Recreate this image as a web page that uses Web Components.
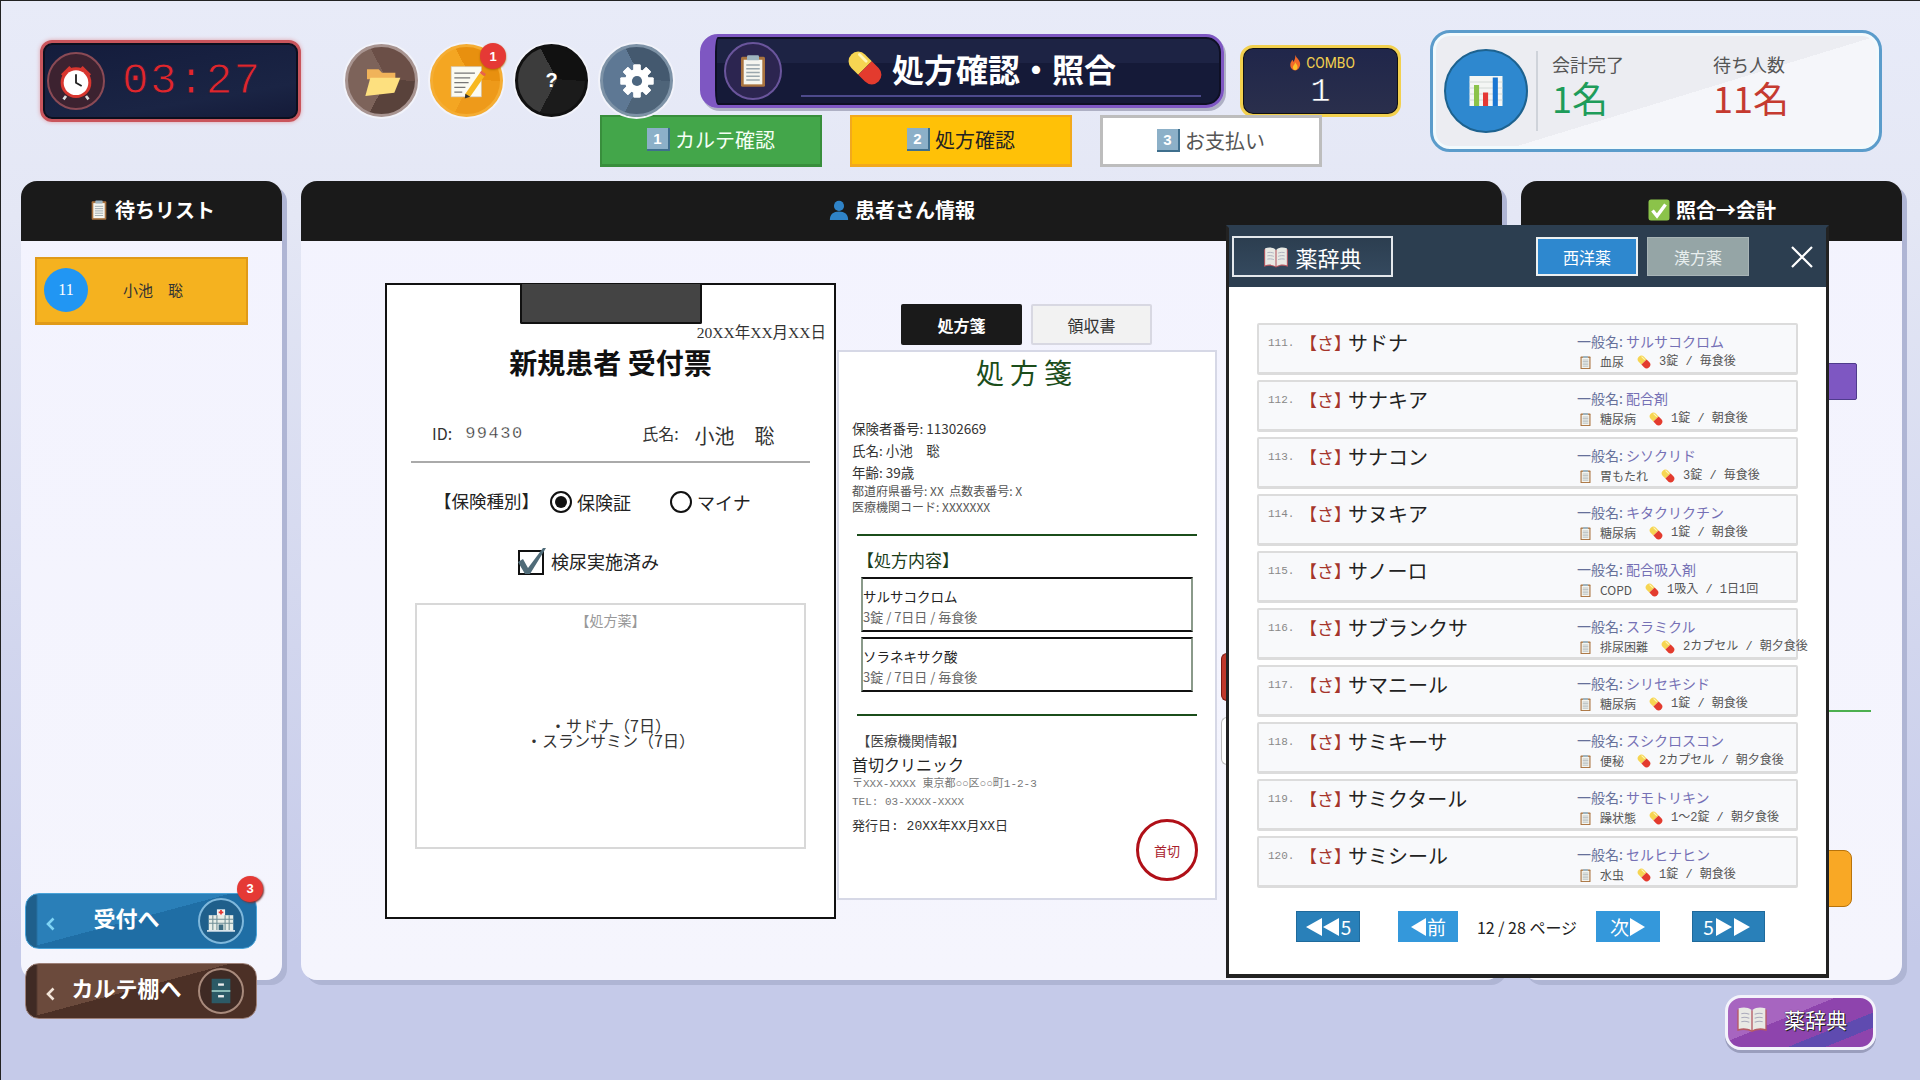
<!DOCTYPE html>
<html lang="ja">
<head>
<meta charset="utf-8">
<title>処方確認・照合</title>
<style>
  html, body { margin: 0; padding: 0; }
  body { width: 1920px; height: 1080px; overflow: hidden; font-family: "Noto Sans CJK JP", "Noto Sans", sans-serif; }
</style>
</head>
<body>
<game-app></game-app>
<script>
const JP = `"Noto Sans CJK JP", "Noto Sans", sans-serif`;
const MONO = `"Liberation Mono", "Noto Sans CJK JP", monospace`;
const SERIF = `"Liberation Serif", "Noto Sans CJK JP", serif`;

function gearTeeth() {
  let out = "";
  for (let i = 0; i < 8; i++) out += `<rect x="9.6" y="1" width="4.8" height="22" rx=".6" fill="#fff" transform="rotate(${i * 45} 12 12)"/>`;
  return out;
}

const ICONS = {
  alarm: `<path d="M3 8 8 3 10 5 5 10Z" fill="#d8362f"/><path d="M21 8 16 3 14 5 19 10Z" fill="#d8362f"/><path d="M6 21 4.5 23M18 21l1.5 2" stroke="#ddd" stroke-width="1.6"/><circle cx="12" cy="13" r="9.2" fill="#d8362f"/><circle cx="12" cy="13" r="7.4" fill="#fff"/><path d="M12 8v5l3.4 2" fill="none" stroke="#222" stroke-width="1.1"/>`,
  folder: `<path d="M3 5h7l2 2h8v4H3Z" fill="#f0b35a"/><path d="M2 21 5 10h18l-3.6 9Z" fill="#fde07f"/>`,
  memo: `<rect x="2" y="3" width="19" height="19" fill="#fbfbf2" stroke="#ccc" stroke-width=".4"/><path d="M4 7h13M4 10h10M4 13h9M4 16h7M4 19h5" stroke="#777" stroke-width=".8"/><path d="M11 20 20 7l3 2-9 13-3.4 1Z" fill="#f7b81f"/><path d="M20 7l1-1.4 3 2L23 9Z" fill="#e8624c"/><path d="M11 20l-.4 3 3.4-1Z" fill="#333"/>`,
  gear: `${gearTeeth()}<circle cx="12" cy="12" r="8" fill="#fff"/><circle cx="12" cy="12" r="3.4" fill="#4c6680"/>`,
  clipboard: `<rect x="4" y="2.5" width="16" height="20" rx="1" fill="#a9733f"/><rect x="5.8" y="4.5" width="12.4" height="16.4" fill="#f5f5ef"/><path d="M7.5 8h9M7.5 10.5h9M7.5 13h9M7.5 15.5h9M7.5 18h9" stroke="#9aa7ad" stroke-width="1"/><rect x="8" y="1.5" width="8" height="3.4" rx=".8" fill="#9fb4bf"/>`,
  pill: `<g transform="rotate(45 12 12)"><path d="M12 6.5H6.5a5.5 5.5 0 0 0 0 11H12Z" fill="#f6d552"/><path d="M12 6.5h5.5a5.5 5.5 0 0 1 0 11H12Z" fill="#e33b2e"/><rect x="3.500" y="8" width="7" height="1.6" rx=".8" fill="#fff6b8"/></g>`,
  fire: `<path d="M12 1c1 4 6 6 7 11 .8 5-3 10-7 10s-8-4-7-9c.4-2.4 2-3.4 2.5-5.4 1 .6 1.6 1.5 1.7 3C11 9 12.5 5 12 1Z" fill="#f0692a"/><path d="M12 11c.5 2 3.4 3.4 3.4 6.3 0 2.4-1.7 4-3.4 4s-3.5-1.6-3.4-3.8c0-2.4 3-3.3 3.4-6.5Z" fill="#fbc02d"/>`,
  chart: `<rect x="1" y="2" width="22" height="20" fill="#f4f6f4"/><path d="M1 6h22M1 10h22M1 14h22M1 18h22" stroke="#cfd6d2" stroke-width=".6"/><rect x="4" y="8" width="3.4" height="14" fill="#8bc34a"/><rect x="10" y="13" width="3.4" height="9" fill="#e53935"/><rect x="16.500" y="3" width="3.4" height="19" fill="#1976d2"/>`,
  person: `<circle cx="12" cy="7.500" r="5.5" fill="#2f83c7"/><path d="M2 23c0-6.500 4-9.500 10-9.500S22 16.500 22 23Z" fill="#2f83c7"/>`,
  check: `<rect x="1.500" y="1.500" width="21" height="21" rx="2.5" fill="#8bc34a"/><path d="M5.500 12.500 10 18 18.500 6.500" fill="none" stroke="#fff" stroke-width="3.4"/>`,
  book: `<path d="M1 5c4-1.600 8-1.200 11 .8 3-2 7-2.400 11-.8v16c-4-1.400-8-1-11 .8-3-1.800-7-2.200-11-.8Z" fill="#b65a63"/><path d="M2 4c3.500-1.200 7-.8 9.500 1v15.500C9 19 5.500 18.600 2 19.500ZM22 4c-3.500-1.200-7-.8-9.500 1v15.500c2.500-1.500 6-1.900 9.500-1Z" fill="#e8e9e4"/><path d="M4 8c2-.5 4-.3 6 .4M4 11c2-.5 4-.3 6 .4M4 14c2-.5 4-.3 6 .4M14 8.400c2-.7 4-.9 6-.4M14 11.400c2-.7 4-.9 6-.4M14 14.400c2-.7 4-.9 6-.4" fill="none" stroke="#aab" stroke-width=".8"/>`,
  hospital: `<rect x="8.500" y="2" width="7" height="6" fill="#f3f3f3"/><path d="M12 2.500v4M10 4.500h4" stroke="#e53935" stroke-width="1.500"/><rect x="1.500" y="7" width="21" height="13" fill="#e8eee8"/><path d="M1.500 10.500h21M1.500 14h21M5 7v13M8.500 7v13M15.500 7v13M19 7v13" stroke="#6f8f96" stroke-width=".9"/><rect x="10" y="15" width="4" height="5" fill="#3b6a80"/><path d="M0 20.500h24" stroke="#fff" stroke-width="1.200"/>`,
  cabinet: `<rect x="4" y="1.500" width="16" height="21" fill="#2c5a66"/><path d="M4 12h16" stroke="#cfe" stroke-width="1"/><rect x="9.500" y="5.500" width="5" height="2" fill="#eee"/><rect x="9.500" y="15.500" width="5" height="2" fill="#eee"/>`
};

class AppIcon extends HTMLElement {
  constructor() { super(); this.attachShadow({ mode: "open" }); }
  connectedCallback() {
    const size = this.getAttribute("size") || 20;
    this.shadowRoot.innerHTML = `<style>:host{display:inline-block;line-height:0;flex:none;width:${size}px;height:${size}px}svg{display:block}</style>
      <svg width="${size}" height="${size}" viewBox="0 0 24 24">${ICONS[this.getAttribute("name")] || ""}</svg>`;
  }
}
customElements.define("app-icon", AppIcon);

class GameTimer extends HTMLElement {
  constructor() { super(); this.attachShadow({ mode: "open" }); }
  connectedCallback() {
    this.shadowRoot.innerHTML = `<style>
      :host { display: flex; flex: none; align-items: center; box-sizing: border-box; width: 261px; height: 82px; margin-top: 10px;
        background: linear-gradient(170deg, #141c3c, #1a2444 70%, #141a38); border: 3px solid #c9555c; border-radius: 12px;
        box-shadow: inset 0 0 0 2px #0c0f1e, 0 0 4px #e0a0a8; padding-left: 4px; color: #e0262c; }
      .ring { width: 58px; height: 58px; border-radius: 50%; background: #3c2230; border: 2px solid #8a4a55; box-sizing: border-box;
        display: flex; align-items: center; justify-content: center; }
      .t { font: 44px ${MONO}; letter-spacing: 1.500px; margin-left: 17px; -webkit-text-stroke: .9px #182040; }
    </style>
    <div class="ring"><app-icon name="alarm" size="40"></app-icon></div><div class="t">03:27</div>`;
  }
}
customElements.define("game-timer", GameTimer);

class RoundButton extends HTMLElement {
  constructor() { super(); this.attachShadow({ mode: "open" }); }
  connectedCallback() {
    const [a, b, c, ring] = this.getAttribute("colors").split(",");
    const badge = this.getAttribute("badge");
    this.shadowRoot.innerHTML = `<style>
      :host { display: block; position: relative; flex: none; box-sizing: border-box; width: 73px; height: 73px; border-radius: 50%;
        background: conic-gradient(from -28deg at 58% 48%, ${a} 0 122deg, ${b} 122deg 235deg, ${c} 235deg 360deg);
        border: 3px solid ${ring}; box-shadow: 0 0 0 2px #f2f3fa; color: #fff; }
      .c { position: absolute; inset: 0; display: flex; align-items: center; justify-content: center; font: bold 20px "Liberation Sans", sans-serif; }
      .b { position: absolute; top: -4px; right: -6px; width: 26px; height: 26px; border-radius: 50%; background: #e53935; border: 0;
        color: #fff; font: bold 13px "Liberation Sans", sans-serif; display: flex; align-items: center; justify-content: center; box-shadow: 0 1px 2px #b36a00; }
    </style><div class="c"><slot></slot></div>${badge ? `<div class="b">${badge}</div>` : ""}`;
  }
}
customElements.define("round-button", RoundButton);

class TitleBanner extends HTMLElement {
  constructor() { super(); this.attachShadow({ mode: "open" }); }
  connectedCallback() {
    this.shadowRoot.innerHTML = `<style>
      :host { display: block; position: relative; flex: none; box-sizing: border-box; width: 524px; height: 74px; margin-top: 4px;
        background: linear-gradient(#1d2344 0 38%, #151a38 38% 100%); border: 3px solid #7e57c2; border-left: 15px solid #7e57c2;
        border-radius: 18px; box-shadow: 2px 3px 0 #aeb0c4, inset 0 0 0 2px #0e1024; color: #fff; }
      .inner { display: flex; align-items: center; height: 100%; }
      .ring { width: 58px; height: 58px; margin-left: 9px; border-radius: 50%; background: #2c2550; border: 2px solid #6a559c;
        box-sizing: border-box; display: flex; align-items: center; justify-content: center; }
      .h { display: flex; align-items: center; gap: 6px; margin: -6px 0 0 62px; font: bold 32px ${JP}; white-space: nowrap; }
      .rule { position: absolute; left: 86px; right: 20px; bottom: 8px; height: 2px; background: #4d4a8c; }
    </style>
    <div class="inner"><div class="ring"><app-icon name="clipboard" size="36"></app-icon></div>
    <div class="h"><app-icon name="pill" size="42"></app-icon><span>処方確認・照合</span></div></div><div class="rule"></div>`;
  }
}
customElements.define("title-banner", TitleBanner);

class ComboBox extends HTMLElement {
  constructor() { super(); this.attachShadow({ mode: "open" }); }
  connectedCallback() {
    this.shadowRoot.innerHTML = `<style>
      :host { display: flex; flex: none; flex-direction: column; align-items: center; box-sizing: border-box; width: 161px; height: 72px; margin-top: 15px;
        background: linear-gradient(#20264a, #2a2f4c); border: 3px solid #f2d04e; border-radius: 13px; box-shadow: inset 0 0 0 1px #111; color: #fff; padding-top: 5px; }
      .l { display: flex; align-items: center; gap: 3px; color: #f2d04e; font: 15px/20px "Roboto", ${JP}; transform: scaleX(.92); }
      .n { font: 34px/38px ${MONO}; -webkit-text-stroke: .6px #252a4a; }
    </style><div class="l"><app-icon name="fire" size="18"></app-icon>COMBO</div><div class="n">1</div>`;
  }
}
customElements.define("combo-box", ComboBox);

class StatsCard extends HTMLElement {
  constructor() { super(); this.attachShadow({ mode: "open" }); }
  connectedCallback() {
    this.shadowRoot.innerHTML = `<style>
      :host { display: flex; flex: none; align-items: center; box-sizing: border-box; width: 452px; height: 122px;
        background: linear-gradient(163deg, #ecedf2 0 55%, #f5f6fa 55% 100%); border: 3px solid #5b9ccb; border-radius: 20px;
        box-shadow: inset 0 0 0 3px #f2fafd; padding-left: 11px; }
      .ic { width: 84px; height: 84px; border-radius: 50%; background: #2e88cf; border: 2px solid #1d628f; box-sizing: border-box;
        display: flex; align-items: center; justify-content: center; }
      .sep { width: 2px; height: 80px; background: #cfd3da; margin: 0 14px 0 8px; }
      .col { width: 161px; font-family: ${JP}; padding-bottom: 13px; }
      .l { font-size: 18px; line-height: 24px; color: #555; }
      .v { font-size: 36px; line-height: 42px; }
      .g { color: #1e9c5a; } .r { color: #c53a30; }
    </style>
    <div class="ic"><app-icon name="chart" size="36"></app-icon></div><div class="sep"></div>
    <div class="col"><div class="l">会計完了</div><div class="v g">1名</div></div>
    <div class="col"><div class="l">待ち人数</div><div class="v r">11名</div></div>`;
  }
}
customElements.define("stats-card", StatsCard);

class StepTab extends HTMLElement {
  constructor() { super(); this.attachShadow({ mode: "open" }); }
  connectedCallback() {
    this.shadowRoot.innerHTML = `<style>
      :host { display: flex; align-items: center; justify-content: center; gap: 5px; box-sizing: border-box; width: 222px; height: 52px;
        font: 20px ${JP}; border: 2px solid; padding-bottom: 2px; }
      :host([kind="done"]) { background: #43a64a; border-color: #388e3c; border-bottom-width: 3px; color: #f4fff4; }
      :host([kind="now"]) { background: #ffc107; border-color: #f2a91c; border-bottom-width: 3px; color: #222; }
      :host([kind="todo"]) { background: #fff; border-color: #bdbdbd; border-width: 3px; color: #555; }
      .k { width: 23px; height: 23px; background: #8cb0c8; border-right: 2px solid #3f6f8d; border-bottom: 2px solid #3f6f8d; box-sizing: border-box;
        color: #fff; font: bold 15px/21px "Liberation Sans", sans-serif; text-align: center; }
    </style><span class="k">${this.getAttribute("n")}</span><span><slot></slot></span>`;
  }
}
customElements.define("step-tab", StepTab);

class SidePanel extends HTMLElement {
  constructor() { super(); this.attachShadow({ mode: "open" }); }
  connectedCallback() {
    this.shadowRoot.innerHTML = `<style>
      :host { display: flex; flex-direction: column; position: relative; height: 799px; border-radius: 16px;
        background: linear-gradient(#f3f3fe, #f5f5fd); box-shadow: 5px 5px 0 #afb5d4; }
      .h { height: 60px; box-sizing: border-box; padding-bottom: 3px; flex: none; display: flex; align-items: center; justify-content: center; gap: 5px; background: #1a1a1a;
        border-radius: 16px 16px 0 0; color: #fff; font: bold 20px ${JP}; }
      .b { flex: 1; position: relative; min-height: 0; }
    </style><div class="h"><slot name="head"></slot></div><div class="b"><slot></slot></div>`;
  }
}
customElements.define("side-panel", SidePanel);

class WaitItem extends HTMLElement {
  constructor() { super(); this.attachShadow({ mode: "open" }); }
  connectedCallback() {
    this.shadowRoot.innerHTML = `<style>
      :host { display: flex; align-items: center; box-sizing: border-box; width: 213px; height: 68px; margin: 16px 0 0 14px; padding: 0 0 2px 7px;
        background: #f5b21f; border: 2px solid #e09a18; border-bottom-width: 3px; font: 15px ${JP}; color: #333; }
      .n { width: 44px; height: 44px; border-radius: 50%; background: #2196f3; color: #fff; font: 16px/44px ${SERIF}; text-align: center; }
      .t { margin-left: 35px; white-space: pre; }
    </style><div class="n">11</div><div class="t">小池　聡</div>`;
  }
}
customElements.define("wait-item", WaitItem);

class NavButton extends HTMLElement {
  constructor() { super(); this.attachShadow({ mode: "open" }); }
  connectedCallback() {
    const [a, b, c, edge, ring, chev] = this.getAttribute("colors").split(",");
    const badge = this.getAttribute("badge");
    this.shadowRoot.innerHTML = `<style>
      :host { display: flex; align-items: center; position: relative; box-sizing: border-box; width: 232px; height: 56px; border-radius: 14px; color: #fff;
        background: linear-gradient(to right, ${c} 0 10px, transparent 12px), linear-gradient(165deg, ${a} 0 47%, ${b} 47% 100%); border: 1px solid ${edge}; }
      svg { flex: none; margin: 6px 0 0 20px; display: block; }
      .t { flex: 1; text-align: center; font: bold 22px ${JP}; white-space: nowrap; margin: -8px 0 0 0; }
      .r { width: 46px; height: 46px; margin-right: 12px; border-radius: 50%; border: 2px solid ${ring}; background: ${c}; box-sizing: border-box;
        display: flex; align-items: center; justify-content: center; }
      .b { position: absolute; top: -18px; right: -7px; width: 26px; height: 26px; border-radius: 50%; background: #e53935; color: #fff;
        font: bold 13px/26px "Liberation Sans", sans-serif; text-align: center; box-shadow: 1px 1px 2px #7a3030; }
    </style><svg width="9" height="14" viewBox="0 0 9 14"><path d="M7.500 1.500 2 7l5.500 5.500" fill="none" stroke="${chev}" stroke-width="2.600"/></svg><div class="t"><slot></slot></div>
    <div class="r"><app-icon name="${this.getAttribute("icon")}" size="28"></app-icon></div>${badge ? `<div class="b">${badge}</div>` : ""}`;
  }
}
customElements.define("nav-button", NavButton);

class ReceptionForm extends HTMLElement {
  constructor() { super(); this.attachShadow({ mode: "open" }); }
  connectedCallback() {
    this.shadowRoot.innerHTML = `<style>
      :host { display: block; box-sizing: border-box; width: 451px; height: 636px; background: #fff; border: 2px solid #111; color: #222; font-family: ${JP}; flex: none; position: relative; z-index: 1; }
      .clip { width: 182px; height: 40px; box-sizing: border-box; margin: -1px auto 0; background: #444; border: 2px solid #111; border-top: 0; border-radius: 0 0 2px 2px; }
      .date { font: 15.500px/18px ${SERIF}; text-align: right; padding-right: 8px; color: #333; }
      h1 { margin: 2px 0 0; font: bold 28px/36px ${JP}; text-align: center; color: #111; }
      .idr { display: flex; align-items: center; height: 30px; margin-top: 38px; padding-left: 45px; font-size: 16px; color: #333; }
      .num { font: 17px ${MONO}; letter-spacing: 1.500px; margin-left: 13px; width: 177px; -webkit-text-stroke: .3px #fff; }
      .name { font-size: 20px; margin-left: 16px; white-space: pre; padding-top: 5px; }
      .hr { height: 2px; background: #aaa; margin: 13px 24px 0; }
      .ins { display: flex; align-items: center; height: 30px; margin-top: 24px; padding-left: 47px; font-size: 18px; }
      .ins .lab { width: 116px; font-size: 17.500px; margin-top: -3px; }
      .radio { width: 22px; height: 22px; box-sizing: border-box; border: 2px solid #111; border-radius: 50%; background: #fff; flex: none; display: flex; align-items: center; justify-content: center; }
      .radio i { width: 12px; height: 12px; border-radius: 50%; background: #111; }
      .opt { margin-left: 5px; font-size: 18px; width: 93px; }
      .chk { display: flex; align-items: center; height: 30px; margin-top: 29px; font-size: 18px; gap: 4px; padding-left: 130px; }
      .chk svg { display: block; }
      .box { height: 246px; margin: 27px 28px 0; border: 2px solid #d8d8d8; box-sizing: border-box; display: flex; flex-direction: column; align-items: center; color: #333; }
      .bh { font-size: 14px; color: #999; margin-top: 5px; line-height: 20px; }
      .ls { margin-top: 88px; text-align: center; font-size: 16px; line-height: 15px; white-space: pre; }
    </style>
    <div class="clip"></div>
    <div class="date">20XX年XX月XX日</div>
    <h1>新規患者 受付票</h1>
    <div class="idr"><span>ID:</span><span class="num">99430</span><span>氏名:</span><span class="name">小池　聡</span></div>
    <div class="hr"></div>
    <div class="ins"><span class="lab">【保険種別】</span><span class="radio"><i></i></span><span class="opt">保険証</span><span class="radio"></span><span class="opt">マイナ</span></div>
    <div class="chk"><svg width="30" height="28" viewBox="0 0 30 28"><rect x="2" y="4" width="24" height="23" fill="#fff" stroke="#111" stroke-width="2"/><path d="M1 15 6 12 11 21 26 1 29 1 13 27 8 27Z" fill="#4f6b78"/></svg><span>検尿実施済み</span></div>
    <div class="box"><div class="bh">【処方薬】</div><div class="ls">・サドナ（7日）
・スランサミン（7日）</div></div>`;
  }
}
customElements.define("reception-form", ReceptionForm);

class PaperTabs extends HTMLElement {
  constructor() { super(); this.attachShadow({ mode: "open" }); }
  connectedCallback() {
    this.shadowRoot.innerHTML = `<style>
      :host { display: flex; gap: 9px; height: 41px; margin: 21px 0 5px 64px; font: 16px ${JP}; }
      div { width: 121px; box-sizing: border-box; display: flex; align-items: center; justify-content: center; border-radius: 2px; }
      .on { background: #1a1a1a; color: #fff; font-weight: bold; }
      .off { background: #f2f2f2; border: 2px solid #d8d8e2; color: #333; }
    </style><div class="on">処方箋</div><div class="off">領収書</div>`;
  }
}
customElements.define("paper-tabs", PaperTabs);

class PrescriptionPaper extends HTMLElement {
  constructor() { super(); this.attachShadow({ mode: "open" }); }
  connectedCallback() {
    this.shadowRoot.innerHTML = `<style>
      :host { display: block; position: relative; box-sizing: border-box; width: 380px; height: 550px; background: #fff; border: 2px solid #d6d8e6; color: #222; font-family: ${JP}; padding: 0 0 0 13px; }
      h2 { margin: 0 0 0 -13px; font: 28px/40px ${JP}; color: #1b4d1b; text-align: center; letter-spacing: 6px; }
      .info { margin-top: 25px; font-size: 13.500px; line-height: 22px; color: #333; }
      .sm { font-size: 12px; line-height: 16px; color: #555; white-space: pre; }
      .rule { height: 2px; background: #1b4d1b; margin: 19px 18px 0 5px; }
      .sec { font-size: 17px; line-height: 22px; color: #1b3d1b; margin: 13px 0 0 5px; }
      .med { box-sizing: border-box; height: 55px; margin: 0 22px 5px 9px; border: 2px solid #8a9a8a; border-top-color: #111; border-bottom-color: #111;
        font-size: 13.500px; color: #222; padding-top: 7px; }
      .med b { display: block; font-weight: 400; line-height: 20px; }
      .med span { display: block; font-size: 13px; line-height: 22px; color: #666; }
      .org { font-size: 13.500px; line-height: 20px; color: #444; margin: 14px 0 0 5px; }
      .cl { font-size: 16px; line-height: 24px; margin-top: 2px; color: #222; }
      .ad { font: 11px/18px ${MONO}; color: #777; white-space: pre; margin-top: -1px; }
      .is { font: 13px/20px ${MONO}; color: #333; margin-top: 6px; }
      .stamp { position: absolute; left: 297px; top: 467px; width: 62px; height: 62px; box-sizing: border-box; border: 3px solid #b01018; border-radius: 50%;
        display: flex; align-items: center; justify-content: center; color: #a8202c; font-size: 13px; }
    </style>
    <h2>処方箋</h2>
    <div class="info">保険者番号: 11302669<br>氏名: 小池　聡<br>年齢: 39歳</div>
    <div class="sm">都道府県番号: XX  点数表番号: X
医療機関コード: XXXXXXX</div>
    <div class="rule"></div>
    <div class="sec">【処方内容】</div>
    <div class="med" style="margin-top:6px"><b>サルサコクロム</b><span>3錠 / 7日日 / 毎食後</span></div>
    <div class="med"><b>ソラネキサク酸</b><span>3錠 / 7日日 / 毎食後</span></div>
    <div class="rule" style="margin-top:22px"></div>
    <div class="org">【医療機関情報】</div>
    <div class="cl">首切クリニック</div>
    <div class="ad">〒XXX-XXXX 東京都○○区○○町1-2-3
TEL: 03-XXXX-XXXX</div>
    <div class="is">発行日: 20XX年XX月XX日</div>
    <div class="stamp">首切</div>`;
  }
}
customElements.define("prescription-paper", PrescriptionPaper);

class DictRow extends HTMLElement {
  constructor() { super(); this.attachShadow({ mode: "open" }); }
  connectedCallback() {
    const a = n => this.getAttribute(n);
    this.shadowRoot.innerHTML = `<style>
      :host { display: flex; flex: none; box-sizing: border-box; width: 541px; height: 52px; background: #f8f9fb; border: 2px solid #dcdcdc; border-bottom-width: 3px; border-radius: 2px;
        font-family: ${JP}; position: relative; white-space: nowrap; padding-top: 1px; }
      .no { flex: none; width: 32px; margin-left: 9px; font: 11px/34px ${MONO}; color: #888; }
      .ka { flex: none; width: 48px; font-size: 17px; line-height: 34px; color: #a5352b; }
      .nm { flex: none; width: 229px; font-size: 20px; line-height: 34px; color: #222; }
      .rt { flex: none; padding-top: 4px; }
      .g { font-size: 14px; line-height: 22px; color: #7570b5; }
      .g i { font-style: normal; color: #66709a; }
      .d { display: flex; align-items: center; font-size: 12px; line-height: 18px; color: #555; height: 18px; margin: 1px 0 0 1px; }
      .d .v { margin: 0 12px 0 7px; }
      .d .x { font-family: ${MONO}; white-space: pre; }
      .d .q { margin-left: 7px; }
    </style>
    <div class="no">${a("no")}.</div><div class="ka">【さ】</div><div class="nm">${a("name")}</div>
    <div class="rt"><div class="g"><i>一般名:</i> ${a("generic")}</div>
    <div class="d"><app-icon name="clipboard" size="15"></app-icon><span class="v">${a("use")}</span><app-icon name="pill" size="16"></app-icon><span class="x q">${a("dose")}</span><span class="x"> / </span><span class="x">${a("when")}</span></div></div>`;
  }
}
customElements.define("dict-row", DictRow);

class DictModal extends HTMLElement {
  constructor() { super(); this.attachShadow({ mode: "open" }); }
  connectedCallback() {
    const rows = [
      [111, "サドナ", "サルサコクロム", "血尿", "3錠", "毎食後"],
      [112, "サナキア", "配合剤", "糖尿病", "1錠", "朝食後"],
      [113, "サナコン", "シソクリド", "胃もたれ", "3錠", "毎食後"],
      [114, "サヌキア", "キタクリクチン", "糖尿病", "1錠", "朝食後"],
      [115, "サノーロ", "配合吸入剤", "COPD", "1吸入", "1日1回"],
      [116, "サブランクサ", "スラミクル", "排尿困難", "2カプセル", "朝夕食後"],
      [117, "サマニール", "シリセキシド", "糖尿病", "1錠", "朝食後"],
      [118, "サミキーサ", "スシクロスコン", "便秘", "2カプセル", "朝夕食後"],
      [119, "サミクタール", "サモトリキン", "躁状態", "1〜2錠", "朝夕食後"],
      [120, "サミシール", "セルヒナヒン", "水虫", "1錠", "朝食後"]
    ].map(r => `<dict-row no="${r[0]}" name="${r[1]}" generic="${r[2]}" use="${r[3]}" dose="${r[4]}" when="${r[5]}"></dict-row>`).join("");
    this.shadowRoot.innerHTML = `<style>
      :host { position: absolute; left: 1226px; top: 225px; width: 603px; height: 753px; box-sizing: border-box; z-index: 5; display: flex; flex-direction: column;
        background: #2c3e50; border: 3px solid #2c3e50; border-bottom-width: 4px; border-left-color: #222; border-right-color: #222; border-bottom-color: #222; font-family: ${JP}; }
      .hd { height: 59px; flex: none; display: flex; align-items: center; padding-left: 3px; }
      .ti { width: 161px; height: 41px; box-sizing: border-box; border: 2px solid #e4e8ec; background: linear-gradient(#2c3e50, #34495e); color: #fff; font-size: 22px; display: flex; align-items: center; justify-content: center; gap: 6px; margin-top: -2px; }
      .tb { width: 102px; height: 39px; box-sizing: border-box; display: flex; align-items: center; justify-content: center; font-size: 16px; color: #fff; margin-top: -2px; }
      .w { background: #2e88cf; border: 2px solid #ecf0f1; margin-left: 143px; }
      .k { background: #95a5a6; border: 1px solid #a8b4b6; color: #e8eeee; margin-left: 9px; }
      .x { margin-left: 41px; margin-top: -2px; display: block; }
      .bd { flex: 1; background: #fff; padding: 36px 0 0 28px; box-sizing: border-box; display: flex; flex-direction: column; gap: 5px; }
      .pg { display: flex; align-items: center; height: 31px; margin-top: 18px; padding-left: 39px; color: #222; }
      .btn { box-sizing: border-box; height: 31px; display: flex; align-items: center; justify-content: center; color: #fff; font-size: 19px; }
      .btn svg { display: block; }
      .d { background: #2980b9; border: 1px solid #1f6a9c; }
      .l { background: #3498db; }
      .t { font-size: 16px; white-space: nowrap; width: 138px; text-align: center; }
    </style>
    <div class="hd"><div class="ti"><app-icon name="book" size="26"></app-icon><span>薬辞典</span></div>
      <div class="tb w">西洋薬</div><div class="tb k">漢方薬</div>
      <svg class="x" width="24" height="24" viewBox="0 0 24 24"><path d="M2 2 22 22M22 2 2 22" stroke="#fff" stroke-width="2.200"/></svg></div>
    <div class="bd">${rows}
      <div class="pg">
        <div class="btn d" style="width:64px"><svg width="36" height="20" viewBox="0 0 36 20"><path d="M17 1v18L1 10ZM34 1v18L18 10Z" fill="#fff"/></svg><span>5</span></div>
        <div class="btn l" style="width:60px;margin-left:38px"><svg width="17" height="20" viewBox="0 0 17 20"><path d="M16 1v18L1 10Z" fill="#fff"/></svg><span>前</span></div>
        <div class="t">12 / 28 ページ</div>
        <div class="btn l" style="width:64px"><span>次</span><svg width="17" height="20" viewBox="0 0 17 20"><path d="M1 1v18l15-9Z" fill="#fff"/></svg></div>
        <div class="btn d" style="width:73px;margin-left:32px"><span>5</span><svg width="40" height="20" viewBox="0 0 40 20"><path d="M2 1v18l16-9ZM20 1v18l16-9Z" fill="#fff"/></svg></div>
      </div>
    </div>`;
  }
}
customElements.define("dict-modal", DictModal);

class BookButton extends HTMLElement {
  constructor() { super(); this.attachShadow({ mode: "open" }); }
  connectedCallback() {
    this.shadowRoot.innerHTML = `<style>
      :host { display: flex; align-items: center; box-sizing: border-box; width: 151px; height: 55px; border-radius: 16px; padding: 0 0 7px 8px; gap: 16px; color: #fff;
        background: linear-gradient(158deg, #a765c0 0 40%, #8e44ad 40% 68%, #5f4bb0 68% 82%, #8e44ad 82%); border: 3px solid #f3f3fb; box-shadow: 0 3px 0 #9a9ebd;
        font: 21px ${JP}; text-shadow: 0 0 1px #000, 1px 1px 0 #222; }
    </style><app-icon name="book" size="32"></app-icon><span>薬辞典</span>`;
  }
}
customElements.define("book-button", BookButton);

class GameApp extends HTMLElement {
  constructor() { super(); this.attachShadow({ mode: "open" }); }
  connectedCallback() {
    this.shadowRoot.innerHTML = `<style>
      :host { display: block; position: relative; width: 1920px; height: 1080px; overflow: hidden; box-sizing: border-box; font-family: ${JP};
        background: linear-gradient(#e8ebf8, #e4e7f5 20%, #c5cae9 88%); box-shadow: inset 1px 1px 0 #222; }
      header { height: 181px; box-sizing: border-box; padding-top: 30px; }
      .top { display: flex; height: 85px; padding-left: 40px; align-items: flex-start; }
      .rounds { flex: none; display: flex; gap: 12px; margin: 14px 28px 0 44px; width: 327px; position: relative; z-index: 2; }
      .steps { display: flex; gap: 28px; padding-left: 600px; position: relative; }
      main { display: grid; grid-template-columns: 261px 1201px 381px; gap: 19px; padding-left: 21px; }
      .center { display: flex; padding: 42px 0 0 84px; }
      .right { display: flex; flex-direction: column; margin-left: 1px; }
      .left-foot { position: absolute; left: 4px; top: 652px; display: flex; flex-direction: column; gap: 14px; z-index: 3; }
      .peek { position: absolute; box-sizing: border-box; }
    </style>
    <header>
      <div class="top">
        <game-timer></game-timer>
        <div class="rounds">
          <round-button colors="#6b4f47,#59423b,#7d635a,#a89490"><app-icon name="folder" size="40"></app-icon></round-button>
          <round-button colors="#e8900f,#ee9a1a,#f4a622,#f5ad33" badge="1"><app-icon name="memo" size="38"></app-icon></round-button>
          <round-button colors="#111,#1b1b1b,#3c3c3c,#111">?</round-button>
          <round-button colors="#44596f,#4e6479,#5e7894,#7d92a6"><app-icon name="gear" size="36"></app-icon></round-button>
        </div>
        <title-banner></title-banner>
        <combo-box style="margin-left:16px"></combo-box>
        <stats-card style="margin-left:29px"></stats-card>
      </div>
      <div class="steps">
        <step-tab kind="done" n="1">カルテ確認</step-tab>
        <step-tab kind="now" n="2">処方確認</step-tab>
        <step-tab kind="todo" n="3">お支払い</step-tab>
      </div>
    </header>
    <main>
      <side-panel>
        <app-icon slot="head" name="clipboard" size="22"></app-icon><span slot="head">待ちリスト</span>
        <wait-item></wait-item>
        <div class="left-foot">
          <nav-button colors="#2a7fb8,#1f6ea5,#1f5f8b,#4aa3d8,#7fb8dc,#7fd4f5" icon="hospital" badge="3">受付へ</nav-button>
          <nav-button colors="#6b4a3c,#4c3026,#3f2a24,#9c8078,#a88a7c,#f2e4d8" icon="cabinet">カルテ棚へ</nav-button>
        </div>
      </side-panel>
      <side-panel>
        <app-icon slot="head" name="person" size="22"></app-icon><span slot="head">患者さん情報</span>
        <div class="center">
          <reception-form></reception-form>
          <div class="right"><paper-tabs></paper-tabs><prescription-paper></prescription-paper></div>
        </div>
        <div class="peek" style="left:920px;top:412px;width:9px;height:48px;background:#c0392b;border:1px solid #7a1a12;border-right:0;border-radius:6px 0 0 6px"></div>
        <div class="peek" style="left:920px;top:476px;width:9px;height:48px;background:#fff;border:1px solid #bbb;border-right:0;border-radius:6px 0 0 6px"></div>
      </side-panel>
      <side-panel>
        <app-icon slot="head" name="check" size="24"></app-icon><span slot="head">照合→会計</span>
        <div class="peek" style="left:300px;top:122px;width:36px;height:37px;background:#7e57c2;border:1px solid #4f3b8c;border-radius:2px"></div>
        <div class="peek" style="left:300px;top:469px;width:50px;height:2px;background:#4caf50"></div>
        <div class="peek" style="left:300px;top:609px;width:31px;height:57px;background:#f9a825;border:1px solid #b8730b;border-radius:0 8px 8px 0"></div>
      </side-panel>
    </main>
    <dict-modal></dict-modal>
    <book-button style="position:absolute;left:1725px;top:995px"></book-button>`;
  }
}
customElements.define("game-app", GameApp);
</script>
</body>
</html>
